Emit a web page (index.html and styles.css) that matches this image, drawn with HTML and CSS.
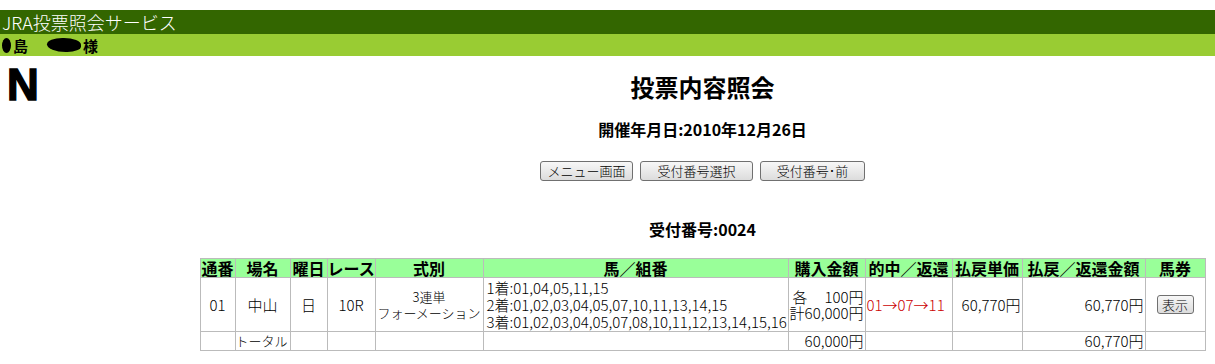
FILE: index.html
```html
<!DOCTYPE html>
<html lang="ja">
<head>
    <meta charset="UTF-8">
    <title>JRA投票照会サービス</title>
    <link rel="stylesheet" href="styles.css">
</head>
<body>
    <div class="service-bar">JRA投票照会サービス</div>
    <div class="user-bar">
        <span class="blot blot-small"></span>島<span class="gap"></span><span class="blot blot-wide"></span>様
    </div>
    <div class="main">
        <div class="side">
            <div class="logo">N</div>
        </div>
        <div class="content">
            <h1>投票内容照会</h1>
            <div class="date">開催年月日:2010年12月26日</div>
            <div class="buttons">
                <button class="btn btn-menu">メニュー画面</button>
                <button class="btn btn-select">受付番号選択</button>
                <button class="btn btn-prev">受付番号･前</button>
            </div>
            <div class="receipt">受付番号:0024</div>
            <table class="result">
                <colgroup>
                    <col style="width:35px">
                    <col style="width:55px">
                    <col style="width:37px">
                    <col style="width:48px">
                    <col style="width:108px">
                    <col style="width:305px">
                    <col style="width:77px">
                    <col style="width:87px">
                    <col style="width:70px">
                    <col style="width:123px">
                    <col style="width:60px">
                </colgroup>
                <tr class="head">
                    <th>通番</th>
                    <th>場名</th>
                    <th>曜日</th>
                    <th>レース</th>
                    <th>式別</th>
                    <th>馬／組番</th>
                    <th>購入金額</th>
                    <th>的中／返還</th>
                    <th>払戻単価</th>
                    <th>払戻／返還金額</th>
                    <th>馬券</th>
                </tr>
                <tr class="row">
                    <td class="center">01</td>
                    <td class="center">中山</td>
                    <td class="center">日</td>
                    <td class="center">10R</td>
                    <td class="center bet-type">3連単<br>フォーメーション</td>
                    <td class="left combos">1着:01,04,05,11,15<br>2着:01,02,03,04,05,07,10,11,13,14,15<br>3着:01,02,03,04,05,07,08,10,11,12,13,14,15,16</td>
                    <td class="right">
                        <div class="amount-line"><span>各</span><span>100円</span></div>
                        <div>計60,000円</div>
                    </td>
                    <td class="hit">01→07→11</td>
                    <td class="right">60,770円</td>
                    <td class="right">60,770円</td>
                    <td class="center"><button class="btn-small">表示</button></td>
                </tr>
                <tr class="total">
                    <td></td>
                    <td class="left total-label">トータル</td>
                    <td></td>
                    <td></td>
                    <td></td>
                    <td></td>
                    <td class="right">60,000円</td>
                    <td></td>
                    <td></td>
                    <td class="right">60,770円</td>
                    <td></td>
                </tr>
            </table>
        </div>
    </div>
</body>
</html>
```

FILE: styles.css
```css
body {
    margin: 0;
    padding-top: 10px;
    font-family: "Noto Sans CJK JP", "Liberation Sans", sans-serif;
    background-color: #fff;
    color: #000;
}

.service-bar {
    height: 24px;
    line-height: 24px;
    padding-left: 2px;
    background-color: #336600;
    color: #fff;
    font-size: 18px;
    font-weight: 300;
}

.user-bar {
    display: flex;
    align-items: center;
    height: 22px;
    padding-left: 2px;
    background-color: #99cc33;
    font-size: 15px;
    font-weight: bold;
}

.blot {
    display: inline-block;
    background-color: #000;
    border-radius: 50%;
}

.blot-small {
    width: 9px;
    height: 15px;
    margin-right: 2px;
}

.blot-wide {
    width: 34px;
    height: 14px;
    margin-right: 2px;
    border-radius: 45% 50% 40% 55%;
}

.gap {
    width: 19px;
}

.main {
    display: flex;
}

.side {
    width: 190px;
    flex-shrink: 0;
}

.logo {
    padding: 7px 0 0 7px;
    font-family: "Liberation Sans", sans-serif;
    font-size: 44px;
    font-weight: 900;
    line-height: 44px;
    -webkit-text-stroke: 1.5px #000;
}

.content {
    flex: 1;
    display: flex;
    flex-direction: column;
    align-items: center;
    padding-top: 16px;
}

h1 {
    margin: 0;
    font-size: 24px;
    line-height: 30px;
    font-weight: bold;
}

.date,
.receipt {
    font-size: 16px;
    line-height: 20px;
    font-weight: bold;
}

.date {
    margin-top: 17px;
}

.buttons {
    display: flex;
    gap: 7px;
    margin-top: 22px;
}

.btn {
    height: 20px;
    padding: 0;
    font-family: inherit;
    font-size: 13px;
    font-weight: 300;
    line-height: 18px;
    color: #000;
    background: linear-gradient(#f7f7f7, #dcdcdc);
    border: 1px solid #707070;
    border-radius: 3px;
}

.btn-menu {
    width: 93px;
}

.btn-select {
    width: 113px;
}

.btn-prev {
    width: 105px;
}

.receipt {
    margin-top: 38px;
}

.result {
    width: 1005px;
    margin-top: 19px;
    table-layout: fixed;
    border-collapse: collapse;
    border: 1px solid #999;
}

.result th,
.result td {
    padding: 0 1px;
    border: 1px solid #bbb;
    white-space: nowrap;
    overflow: hidden;
}

.result th {
    height: 18px;
    padding: 0;
    font-size: 16px;
    line-height: 18px;
    font-weight: bold;
    background-color: #99ff99;
    overflow: visible;
}

.result td {
    font-size: 15px;
    font-weight: 300;
    line-height: 16px;
}

.row td {
    height: 53px;
}

.total td {
    height: 18px;
}

.result .bet-type {
    padding: 0;
    font-size: 13px;
}

.result .combos {
    padding-left: 3px;
    line-height: 17px;
}

.result .total-label {
    padding: 0;
    font-size: 13px;
}

.center {
    text-align: center;
}

.left {
    text-align: left;
}

.right {
    text-align: right;
}

.amount-line {
    display: flex;
    justify-content: space-between;
    padding-left: 3px;
}

.hit {
    color: #cc0000;
    text-align: left;
}

.btn-small {
    width: 37px;
    height: 19px;
    padding: 0;
    font-family: inherit;
    font-size: 13px;
    font-weight: 300;
    line-height: 17px;
    background: linear-gradient(#f7f7f7, #dcdcdc);
    border: 1px solid #707070;
    border-radius: 3px;
}
```
